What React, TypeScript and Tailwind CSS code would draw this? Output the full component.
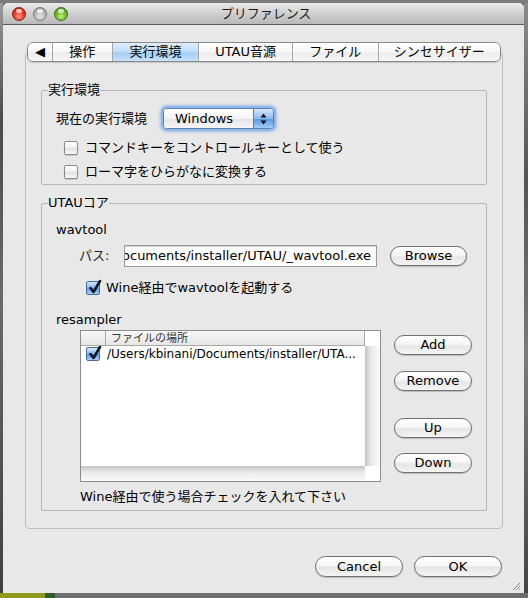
import React from "react";

const font = "font-['DejaVu_Sans','Noto_Sans_CJK_JP',sans-serif]";

function AquaButton({ children, className = "" }: { children: React.ReactNode; className?: string }) {
  return (
    <div
      className={`flex items-center justify-center rounded-full border border-[#707070] bg-[linear-gradient(to_bottom,#ffffff_0%,#f6f6f6_45%,#e6e6e6_55%,#f4f4f4_100%)] shadow-[0_1px_1px_rgba(0,0,0,0.2)] text-[13px] text-black ${className}`}
    >
      {children}
    </div>
  );
}

function CheckBox({ checked = false }: { checked?: boolean }) {
  if (checked) {
    return (
      <div className="relative shrink-0 w-[14px] h-[14px] rounded-[2px] border border-[#4a6e9c] bg-[linear-gradient(to_bottom,#d6e8fa_0%,#8fbdf0_45%,#5b9be6_55%,#a9d0f6_100%)]">
        <svg className="absolute left-[1px] top-[-3px]" width="14" height="16" viewBox="0 0 14 16">
          <path d="M2.5 9 L5.5 13 L12 2" fill="none" stroke="#10152a" strokeWidth="2.6" strokeLinecap="round" strokeLinejoin="round" />
        </svg>
      </div>
    );
  }
  return (
    <div className="shrink-0 w-[14px] h-[14px] rounded-[2px] border border-[#8a8a8a] bg-[linear-gradient(to_bottom,#ffffff,#f0f0f0_50%,#e2e2e2_55%,#f8f8f8)] shadow-[0_1px_1px_rgba(0,0,0,0.15)]" />
  );
}

function Light({ color }: { color: "red" | "gray" | "green" }) {
  const bg =
    color === "red"
      ? "bg-[radial-gradient(circle_at_50%_70%,#ff9a86_0%,#e9402b_45%,#b41d0e_100%)] border-[#8c1a10]"
      : color === "green"
      ? "bg-[radial-gradient(circle_at_50%_70%,#c9f07a_0%,#6fbf2c_45%,#3f8a12_100%)] border-[#3b6e12]"
      : "bg-[radial-gradient(circle_at_50%_70%,#e4e4e4_0%,#b9b9b9_50%,#8f8f8f_100%)] border-[#7a7a7a]";
  return (
    <div className={`relative w-[14px] h-[14px] rounded-full border ${bg}`}>
      <div className="absolute left-[3px] top-[1px] w-[6px] h-[4px] rounded-full bg-white/70" />
    </div>
  );
}

const tabs = [
  { label: "◀", w: "w-[24px]" },
  { label: "操作", w: "w-[60px]" },
  { label: "実行環境", w: "w-[87px]", active: true },
  { label: "UTAU音源", w: "w-[94px]" },
  { label: "ファイル", w: "w-[86px]" },
  { label: "シンセサイザー", w: "w-[123px]" },
];

export default function App() {
  return (
    <div className={`w-[528px] h-[598px] overflow-hidden bg-[#5e5e5e] ${font}`}>
      <div className="h-[3px] bg-[#7b7b7b]" />
      <div className="flex">
        <div className="w-[3px] h-[590px] bg-[linear-gradient(to_bottom,#9a9a9a,#4a4a4a_20%,#6a6a6a_50%,#3f3f3f)]" />
        {/* window */}
        <div className="w-[521px] h-[590px] rounded-t-[5px] bg-[#e8e8e8] flex flex-col overflow-hidden">
          <div className="relative h-[22px] flex items-center border-b border-[#5a5a5a] bg-[linear-gradient(to_bottom,#e9e9e9,#cfcfcf_50%,#b9b9b9)] rounded-t-[5px]">
            <div className="flex items-center gap-[7px] pl-[9px]">
              <Light color="red" />
              <Light color="gray" />
              <Light color="green" />
            </div>
            <div className="flex-1 text-center text-[13px] text-[#1a1a1a] pr-[70px] pl-[10px]">プリファレンス</div>
          </div>

          {/* tab pane */}
          <div className="ml-[22px] mt-[17px] w-[478px]">
            <div className="relative z-10 ml-[2px] flex w-[474px] h-[20px] rounded-[6px] border border-[#8a8a8a] overflow-hidden shadow-[0_1px_1px_rgba(0,0,0,0.15)]">
              {tabs.map((t, i) => (
                <div
                  key={i}
                  className={`${t.w} flex items-center justify-center text-[13px] text-black ${
                    i > 0 ? "border-l border-[#a8a8a8]" : ""
                  } ${
                    t.active
                      ? "bg-[linear-gradient(to_bottom,#e0effc,#bcdcf8_50%,#a2cdf5_55%,#c4e2fb)]"
                      : "bg-[linear-gradient(to_bottom,#ffffff,#f7f7f7_50%,#ececec_55%,#f7f7f7)]"
                  }`}
                >
                  {t.label}
                </div>
              ))}
            </div>
            <div className="-mt-[10px] h-[477px] rounded-[4px] border border-[#bdbdbd] bg-[#e8e8e8] pt-[29px]">
              {/* group 1 */}
              <fieldset className="mx-[15px] border border-[#b8b8b8] rounded-[2px] pb-[3px]">
                <legend className="ml-[6px] text-[13px] leading-[16px] text-black">実行環境</legend>
                <div className="mt-[10px] pl-[14px] flex items-center h-[21px]">
                  <span className="text-[13px] text-black w-[107px]">現在の実行環境</span>
                  <div className="flex w-[111px] h-[21px] rounded-[4px] border border-[#5b7fb0] shadow-[0_0_0_2px_#8cb8ec,0_0_3px_3px_rgba(80,140,220,0.45)] overflow-hidden">
                    <div className="flex-1 flex items-center pl-[11px] text-[13px] text-black bg-[linear-gradient(to_bottom,#ffffff,#f4f4f4_50%,#e6e6e6_55%,#f6f6f6)]">
                      Windows
                    </div>
                    <div className="w-[20px] flex flex-col items-center justify-center border-l border-[#5b7fb0] bg-[linear-gradient(to_bottom,#d3e7fb,#8dbbee_50%,#5c9ae4_55%,#a5cdf5)]">
                      <svg width="7" height="12" viewBox="0 0 7 12">
                        <path d="M3.5 0.5 L6.5 4.5 L0.5 4.5 Z" fill="#111" />
                        <path d="M3.5 11.5 L6.5 7.5 L0.5 7.5 Z" fill="#111" />
                      </svg>
                    </div>
                  </div>
                </div>
                <div className="mt-[10px] pl-[22px] flex items-center gap-[7px] h-[18px]">
                  <CheckBox />
                  <span className="text-[13px] text-black">コマンドキーをコントロールキーとして使う</span>
                </div>
                <div className="mt-[6px] pl-[22px] flex items-center gap-[7px] h-[18px]">
                  <CheckBox />
                  <span className="text-[13px] text-black">ローマ字をひらがなに変換する</span>
                </div>
              </fieldset>

              {/* group 2 */}
              <fieldset className="mx-[15px] mt-[10px] border border-[#b8b8b8] rounded-[2px] pb-[5px]">
                <legend className="ml-[6px] text-[13px] leading-[16px] text-black">UTAUコア</legend>
                <div className="mt-[11px] pl-[14px] h-[16px] flex items-center text-[13px] text-black">wavtool</div>
                <div className="mt-[7px] pl-[37px] flex items-center h-[22px]">
                  <span className="w-[45px] text-[13px] text-[#222]">パス:</span>
                  <div className="w-[253px] h-[22px] border border-[#9a9a9a] bg-white shadow-[inset_0_1px_1px_rgba(0,0,0,0.2)] flex justify-end items-center overflow-hidden whitespace-nowrap pr-[5px] text-[13px] text-black">
                    /Users/kbinani/Documents/installer/UTAU/_wavtool.exe
                  </div>
                  <AquaButton className="ml-[13px] w-[77px] h-[20px]">Browse</AquaButton>
                </div>
                <div className="mt-[13px] pl-[44px] flex items-center gap-[6px] h-[16px]">
                  <CheckBox checked />
                  <span className="text-[13px] text-black">Wine経由でwavtoolを起動する</span>
                </div>
                <div className="mt-[16px] pl-[14px] h-[16px] flex items-center text-[13px] text-black">resampler</div>
                <div className="mt-[2px] pl-[38px] flex">
                  {/* table */}
                  <div className="w-[301px] h-[152px] border border-[#8c8c8c] bg-white flex flex-col">
                    <div className="flex h-[15px]">
                      <div className="w-[25px] border-r border-b border-[#a8a8a8] bg-[linear-gradient(to_bottom,#f7f7f7,#e6e6e6)]" />
                      <div className="w-[259px] flex items-center pl-[5px] border-r border-b border-[#a8a8a8] bg-[linear-gradient(to_bottom,#f7f7f7,#e6e6e6)] text-[11px] leading-[11px] text-[#333]">
                        ファイルの場所
                      </div>
                      <div className="flex-1 bg-white" />
                    </div>
                    <div className="flex flex-1">
                      <div className="w-[284px] flex flex-col">
                        <div className="flex-1 bg-white overflow-hidden">
                          <div className="flex items-center h-[16px] pl-[5px] gap-[7px]">
                            <CheckBox checked />
                            <span className="text-[12px] text-black whitespace-nowrap">/Users/kbinani/Documents/installer/UTA...</span>
                          </div>
                        </div>
                        <div className="h-[15px] bg-[linear-gradient(to_bottom,#c4c4c4,#e8e8e8_40%,#fbfbfb)]" />
                      </div>
                      <div className="flex-1 flex flex-col">
                        <div className="flex-1 bg-[linear-gradient(to_right,#c4c4c4,#e8e8e8_40%,#fbfbfb)]" />
                        <div className="h-[15px] bg-white" />
                      </div>
                    </div>
                  </div>
                  {/* side buttons */}
                  <div className="ml-[13px] pt-[5px] flex flex-col">
                    <AquaButton className="w-[78px] h-[20px]">Add</AquaButton>
                    <AquaButton className="mt-[16px] w-[78px] h-[20px]">Remove</AquaButton>
                    <AquaButton className="mt-[27px] w-[78px] h-[20px]">Up</AquaButton>
                    <AquaButton className="mt-[15px] w-[78px] h-[20px]">Down</AquaButton>
                  </div>
                </div>
                <div className="mt-[7px] pl-[38px] h-[16px] flex items-center text-[13px] text-black">
                  Wine経由で使う場合チェックを入れて下さい
                </div>
              </fieldset>
            </div>
          </div>

          {/* bottom buttons */}
          <div className="mt-[27px] flex justify-end gap-[11px] pr-[22px]">
            <AquaButton className="w-[88px] h-[21px]">Cancel</AquaButton>
            <AquaButton className="w-[88px] h-[21px]">OK</AquaButton>
          </div>
          <div className="mt-auto flex justify-end pr-[3px] pb-[2px]">
            <svg width="10" height="10" viewBox="0 0 10 10">
              <path d="M9 2 L2 9 M9 5 L5 9 M9 8 L8 9" stroke="#8a8a8a" strokeWidth="1" />
            </svg>
          </div>
        </div>
        <div className="w-[4px] h-[590px] bg-[linear-gradient(to_bottom,#8a8a8a,#555_30%,#7a7a7a_60%,#444)]" />
      </div>
      <div className="flex h-[5px]">
        <div className="w-[45px] bg-[#8f9b18]" />
        <div className="w-[10px] bg-[#2f5d2a]" />
        <div className="flex-1 bg-[#6f6f6f]" />
      </div>
    </div>
  );
}
